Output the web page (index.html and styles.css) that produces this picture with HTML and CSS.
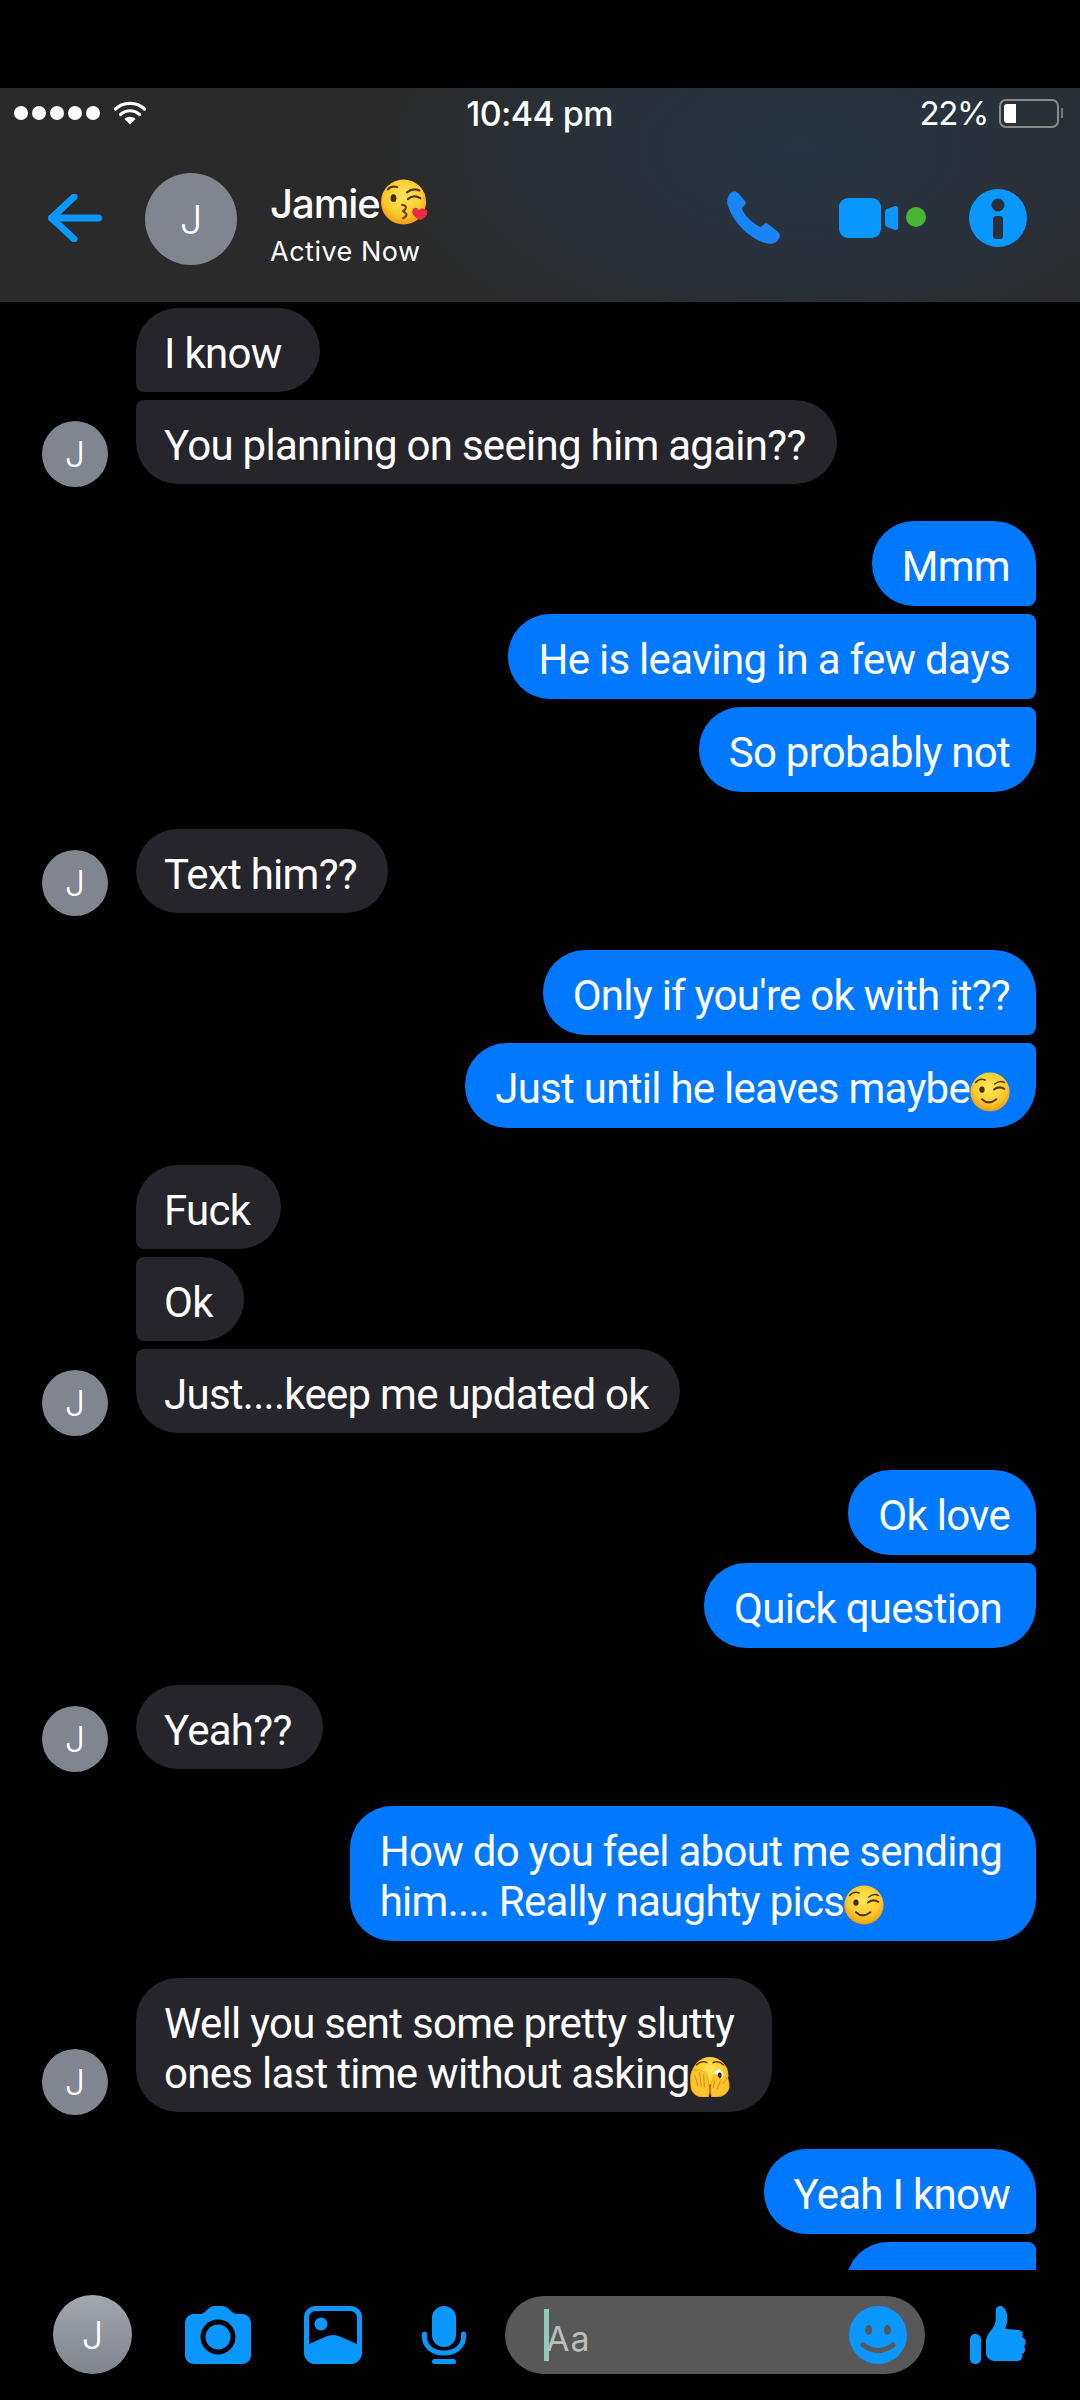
FILE: index.html
```html
<!DOCTYPE html>
<html lang="en">
<head>
<meta charset="utf-8">
<title>Jamie</title>
<link rel="stylesheet" href="styles.css">
</head>
<body>
<svg class="sprite" aria-hidden="true">
  <defs>
    <radialGradient id="face" cx="50%" cy="38%" r="62%">
      <stop offset="0" stop-color="#ffe75c"/>
      <stop offset=".65" stop-color="#fdcb2f"/>
      <stop offset="1" stop-color="#f39a12"/>
    </radialGradient>
    <symbol id="e-kiss" viewBox="0 0 100 100">
      <circle cx="47" cy="50" r="47" fill="url(#face)"/>
      <ellipse cx="26" cy="42" rx="6" ry="8" fill="#4a2a0c"/>
      <path d="M14 24Q22 15 34 19" fill="none" stroke="#5a3410" stroke-width="4" stroke-linecap="round"/>
      <path d="M54 30Q66 20 80 26M56 44Q68 34 82 42" fill="none" stroke="#5a3410" stroke-width="4.5" stroke-linecap="round"/>
      <path d="M44 56Q56 58 50 66Q42 68 50 72Q58 78 46 84" fill="none" stroke="#7a3c10" stroke-width="4.5" stroke-linecap="round"/>
      <path d="M82 88C70 82 62 74 66 66C69 60 76 61 79 67C83 62 92 62 96 68C99 76 90 84 82 88Z" fill="#e92d3f"/>
    </symbol>
    <symbol id="e-wink" viewBox="0 0 100 100">
      <circle cx="50" cy="50" r="49" fill="url(#face)"/>
      <path d="M14 26Q24 14 38 20M62 30Q74 20 86 26" fill="none" stroke="#5a3410" stroke-width="4" stroke-linecap="round"/>
      <ellipse cx="30" cy="44" rx="6.5" ry="8" fill="#4a2a0c"/>
      <path d="M60 44Q72 34 86 42" fill="none" stroke="#5a3410" stroke-width="5" stroke-linecap="round"/>
      <path d="M30 68Q46 84 66 68" fill="none" stroke="#5a3410" stroke-width="5" stroke-linecap="round"/>
    </symbol>
    <symbol id="e-peek" viewBox="0 0 100 100">
      <circle cx="50" cy="46" r="46" fill="url(#face)"/>
      <path d="M16 20Q28 8 42 14M58 14Q72 8 84 20" fill="none" stroke="#6a3d10" stroke-width="4" stroke-linecap="round"/>
      <ellipse cx="72" cy="44" rx="11" ry="13" fill="#fff"/>
      <ellipse cx="74" cy="46" rx="5" ry="7" fill="#3a2208"/>
      <path d="M44 72Q50 66 56 72L54 92H46Z" fill="#8a4a10"/>
      <path d="M46 100C20 104 2 92 2 70C0 50 2 34 10 30C14 30 16 36 20 32C26 30 28 34 32 36C40 36 42 44 44 52C48 66 50 84 46 100Z" fill="#fcc42a" stroke="#e59a15" stroke-width="2"/>
      <path d="M54 100C66 100 92 102 98 76C98 62 96 54 92 52L84 66L66 44C60 42 58 48 58 54C52 64 50 84 54 100Z" fill="#fcc42a" stroke="#e59a15" stroke-width="2"/>
      <path d="M12 44L20 74M24 38L28 74M34 44L36 76M62 58L58 78M76 60L68 80" fill="none" stroke="#c98318" stroke-width="2"/>
    </symbol>
  </defs>
</svg>

<div class="top-gap"></div>

<header class="header">
  <div class="status">
    <div class="status-left">
      <div class="signal"><i></i><i></i><i></i><i></i><i></i></div>
      <svg class="wifi" viewBox="0 0 32 24"><path d="M1.5 8C9 .5 23 .5 30.5 8M6.5 13.5C12 8.5 20 8.5 25.500 13.500" fill="none" stroke="#fff" stroke-width="3.200" stroke-linecap="round"/><path d="M10.500 18C13.500 15 18.500 15 21.500 18L16 23.500Z" fill="#fff"/></svg>
    </div>
    <div class="clock">10:44 pm</div>
    <div class="status-right">
      <span class="percent">22%</span>
      <div class="battery"><div class="battery-level"></div></div>
      <div class="battery-nub"></div>
    </div>
  </div>
  <div class="nav">
    <svg class="back" viewBox="0 0 54 48"><path d="M3.500 24H50.500M26 3L3.500 24L26 45" fill="none" stroke="#0a97ff" stroke-width="7" stroke-linecap="round" stroke-linejoin="round"/></svg>
    <div class="avatar avatar-lg">J</div>
    <div class="who">
      <div class="name">Jamie<svg class="emoji-name" role="img" aria-label="😘"><use href="#e-kiss"/></svg></div>
      <div class="active">Active Now</div>
    </div>
    <div class="actions">
      <svg class="ic-phone" viewBox="0 0 53 53"><path d="M5 1C8-1 10 1 12 3L18 10C20 12 18 14 15 17C15 22 28 35 34 36C37 33 39 31 41 33L51 41C54 44 53 47 50 50C46 54 42 53 38 52C20 46 6 30 1 15C-1 9 1 4 5 1Z" fill="#1a85f8"/></svg>
      <svg class="ic-video" viewBox="0 0 87 40"><rect width="42" height="40" rx="9" fill="#0a97ff"/><path d="M46 14Q46 12 48 11L56 8Q59 8 59 10V30Q59 32 56 32L48 29Q46 28 46 26Z" fill="#0a97ff"/><circle cx="77" cy="19" r="10" fill="#47b52f"/></svg>
      <svg class="ic-info" viewBox="0 0 58 58"><circle cx="29" cy="29" r="29" fill="#0a97ff"/><circle cx="29" cy="16" r="6.500" fill="#28303a"/><rect x="24" y="27" width="10" height="23" rx="3" fill="#28303a"/></svg>
    </div>
  </div>
</header>

<main class="chat">
  <section class="group group-in">
    <div class="avatar avatar-sm">J</div>
    <div class="stack">
      <p class="bubble in first wide-tail">I know</p>
      <p class="bubble in last">You planning on seeing him again??</p>
    </div>
  </section>

  <section class="group group-out">
    <div class="stack">
      <p class="bubble out first">Mmm</p>
      <p class="bubble out middle">He is leaving in a few days</p>
      <p class="bubble out last">So probably not</p>
    </div>
  </section>

  <section class="group group-in">
    <div class="avatar avatar-sm">J</div>
    <div class="stack"><p class="bubble in">Text him??</p></div>
  </section>

  <section class="group group-out">
    <div class="stack">
      <p class="bubble out first">Only if you're ok with it??</p>
      <p class="bubble out last">Just until he leaves maybe<svg class="emoji" role="img" aria-label="😉"><use href="#e-wink"/></svg></p>
    </div>
  </section>

  <section class="group group-in">
    <div class="avatar avatar-sm">J</div>
    <div class="stack">
      <p class="bubble in first">Fuck</p>
      <p class="bubble in middle">Ok</p>
      <p class="bubble in last">Just....keep me updated ok</p>
    </div>
  </section>

  <section class="group group-out">
    <div class="stack">
      <p class="bubble out first">Ok love</p>
      <p class="bubble out last wide-tail">Quick question</p>
    </div>
  </section>

  <section class="group group-in">
    <div class="avatar avatar-sm">J</div>
    <div class="stack"><p class="bubble in">Yeah??</p></div>
  </section>

  <section class="group group-out">
    <div class="stack">
      <p class="bubble out wide-tail">How do you feel about me sending<br>him.... Really naughty pics<svg class="emoji" role="img" aria-label="😉"><use href="#e-wink"/></svg></p>
    </div>
  </section>

  <section class="group group-in">
    <div class="avatar avatar-sm">J</div>
    <div class="stack">
      <p class="bubble in wide-tail">Well you sent some pretty slutty<br>ones last time without asking<svg class="emoji" role="img" aria-label="🫣"><use href="#e-peek"/></svg></p>
    </div>
  </section>

  <section class="group group-out">
    <div class="stack">
      <p class="bubble out first">Yeah I know</p>
      <p class="bubble out last cut"><svg class="emoji" role="img" aria-label="😉"><use href="#e-wink"/></svg></p>
    </div>
  </section>
</main>

<footer class="composer">
  <div class="avatar avatar-me">J</div>
  <svg class="ic-camera" viewBox="0 0 66 58"><path d="M9 8H15C18 8 20 6 22 4C25 1 27 0 30 0H37C40 0 42 1 45 4C47 6 49 8 52 8H57C62 8 66 12 66 17V49C66 54 62 58 57 58H9C4 58 0 54 0 49V17C0 12 4 8 9 8Z" fill="#0a97ff"/><circle cx="33" cy="31" r="17.500" fill="#000"/><circle cx="33" cy="31" r="12.500" fill="#0a97ff"/></svg>
  <svg class="ic-gallery" viewBox="0 0 58 58"><rect x="2.500" y="2.500" width="53" height="53" rx="9" fill="none" stroke="#0a97ff" stroke-width="5"/><circle cx="17" cy="18" r="6.500" fill="#0a97ff"/><path d="M3 39L21 31Q29 27 37 31L55 39V50Q55 55 50 55H8Q3 55 3 50Z" fill="#0a97ff"/></svg>
  <svg class="ic-mic" viewBox="0 0 44 58"><rect x="10" width="24" height="41" rx="12" fill="#0a97ff"/><path d="M2.500 28V31C2.500 40 10 47 22 47S41.500 40 41.500 31V28" fill="none" stroke="#0a97ff" stroke-width="5" stroke-linecap="round"/><rect x="10" y="53" width="24" height="5" rx="2.500" fill="#0a97ff"/></svg>
  <div class="field">
    <span class="caret"></span>
    <span class="placeholder">Aa</span>
    <svg class="ic-smile" viewBox="0 0 58 58"><circle cx="29" cy="29" r="29" fill="#0a97ff"/><ellipse cx="19.500" cy="24" rx="3.500" ry="5" fill="#585858"/><ellipse cx="38.500" cy="24" rx="3.500" ry="5" fill="#585858"/><path d="M14 39Q29 50 44 39" fill="none" stroke="#585858" stroke-width="5" stroke-linecap="round"/></svg>
  </div>
  <svg class="ic-like" viewBox="0 0 58 58"><rect y="28" width="11" height="30" rx="5" fill="#0a97ff"/><path d="M16 35C16 30 20 26 24 20C27 15 25 8 26 3C27 0 31-1 33 1C37 4 38 11 37 17C36 20 35 22 36 23L48 24C52 24 54 28 52 31C56 33 57 37 54 40C56 43 55 47 52 48C53 52 51 55 47 55L28 55C21 56 16 52 16 47Z" fill="#0a97ff"/></svg>
</footer>
</body>
</html>
```

FILE: styles.css
```css
* { box-sizing: border-box; }

html, body {
  margin: 0;
  padding: 0;
  background: #000;
}

body {
  width: 1080px;
  height: 2400px;
  display: flex;
  flex-direction: column;
  overflow: hidden;
  color: #fff;
  font-family: Inter, "Liberation Sans", sans-serif;
}

.sprite { display: block; width: 0; height: 0; }

.top-gap { height: 88px; flex: none; }

/* Header */
.header {
  height: 214px;
  flex: none;
  background:
    radial-gradient(ellipse 420px 230px at 800px 60px, #283542 0%, #29323c 45%, rgba(42, 42, 42, 0) 100%),
    #2a2a2a;
}

.status {
  height: 50px;
  padding: 0 17px 0 14px;
  display: grid;
  grid-template-columns: 1fr auto 1fr;
  align-items: center;
}

.status-left { display: flex; align-items: center; gap: 14px; }

.signal { display: flex; gap: 4px; }
.signal i {
  width: 14px;
  height: 14px;
  border-radius: 50%;
  background: #fff;
}

.wifi { width: 32px; height: 24px; }

.clock {
  font-size: 34px;
  font-weight: 500;
  letter-spacing: -0.6px;
  margin-left: 2px;
}

.status-right {
  display: flex;
  align-items: center;
  justify-content: flex-end;
}

.percent { font-size: 33px; letter-spacing: -1.4px; margin-right: 11px; }

.battery {
  width: 60px;
  height: 29px;
  padding: 3px;
  border: 2px solid #8a8a8a;
  border-radius: 7px;
}
.battery-level { width: 12px; height: 100%; background: #fff; border-radius: 3px 0 0 3px; }
.battery-nub { width: 2px; height: 10px; margin-left: 2px; background: #777; }

.nav {
  height: 164px;
  padding: 0 53px 5px 48px;
  display: flex;
  align-items: center;
}

.back { width: 54px; height: 48px; margin-right: 43px; }

.avatar {
  flex: none;
  display: flex;
  align-items: center;
  justify-content: center;
  border-radius: 50%;
  background: #81858f;
  color: #fff;
  font-weight: 300;
}

.avatar-lg { width: 92px; height: 92px; font-size: 40px; margin: 3px 33px 0 0; }

.who { display: flex; flex-direction: column; padding-top: 12px; }

.name {
  font-size: 40px;
  font-weight: 500;
  letter-spacing: -1px;
  line-height: 50px;
  display: flex;
  align-items: center;
}

.emoji-name { width: 50px; height: 48px; margin-top: -3px; }

.active { font-size: 27px; letter-spacing: 0.5px; line-height: 34px; margin-top: 6px; }

.actions { margin-left: auto; display: flex; align-items: center; }
.ic-phone { width: 53px; height: 53px; margin-right: 59px; }
.ic-video { width: 87px; height: 40px; margin-right: 43px; }
.ic-info { width: 58px; height: 58px; }

/* Chat */
.chat {
  flex: 1;
  min-height: 0;
  overflow: hidden;
  padding: 6px 44px 0 42px;
  display: flex;
  flex-direction: column;
  gap: 37px;
}

.group { display: flex; align-items: flex-end; flex: none; }
.group-out { justify-content: flex-end; }

.stack { display: flex; flex-direction: column; gap: 8px; min-width: 0; }
.group-in .stack { align-items: flex-start; }
.group-out .stack { align-items: flex-end; }

.avatar-sm {
  width: 66px;
  height: 66px;
  font-size: 36px;
  margin-right: 28px;
  margin-bottom: -3px;
}

.bubble {
  margin: 0;
  font-family: Roboto, Inter, sans-serif;
  font-size: 42px;
  line-height: 50px;
  letter-spacing: -0.72px;
  white-space: nowrap;
  border-radius: 42px;
}

.emoji { width: 40px; height: 40px; vertical-align: -9px; }

.in {
  background: #26252c;
  padding: 21px 31px 13px 28px;
}
.out {
  background: #0078ff;
  padding: 21px 26px 14px 30px;
}

.in.first { border-bottom-left-radius: 8px; }
.in.middle { border-top-left-radius: 8px; border-bottom-left-radius: 8px; }
.in.last { border-top-left-radius: 8px; }
.out.first { border-bottom-right-radius: 8px; }
.out.middle { border-top-right-radius: 8px; border-bottom-right-radius: 8px; }
.out.last { border-top-right-radius: 8px; }

.in.wide-tail { padding-right: 38px; }
.out.wide-tail { padding-right: 34px; }

.cut { width: 190px; height: 85px; text-align: right; padding-right: 26px; }

/* Composer */
.composer {
  height: 130px;
  flex: none;
  padding: 25px 52px 0 53px;
  display: flex;
  align-items: flex-start;
}

.avatar-me {
  width: 79px;
  height: 79px;
  font-size: 38px;
  background: linear-gradient(#a3a7b0, #7f838c);
  margin-right: 53px;
}

.ic-camera { width: 66px; height: 58px; margin: 11px 53px 0 0; }
.ic-gallery { width: 58px; height: 58px; margin: 11px 60px 0 0; }
.ic-mic { width: 44px; height: 58px; margin: 11px 39px 0 0; }

.field {
  width: 420px;
  height: 78px;
  flex: none;
  margin: 1px 45px 0 0;
  border-radius: 39px;
  background: #585858;
  display: flex;
  align-items: center;
  padding: 0 18px 0 39px;
}

.caret { width: 5px; height: 52px; background: #8fcabb; margin-right: -3px; }
.placeholder { font-size: 34px; color: #bdbdbd; letter-spacing: 1px; padding-top: 6px; }
.ic-smile { width: 58px; height: 58px; margin-left: auto; }
.ic-like { width: 58px; height: 58px; margin-top: 11px; }
```
